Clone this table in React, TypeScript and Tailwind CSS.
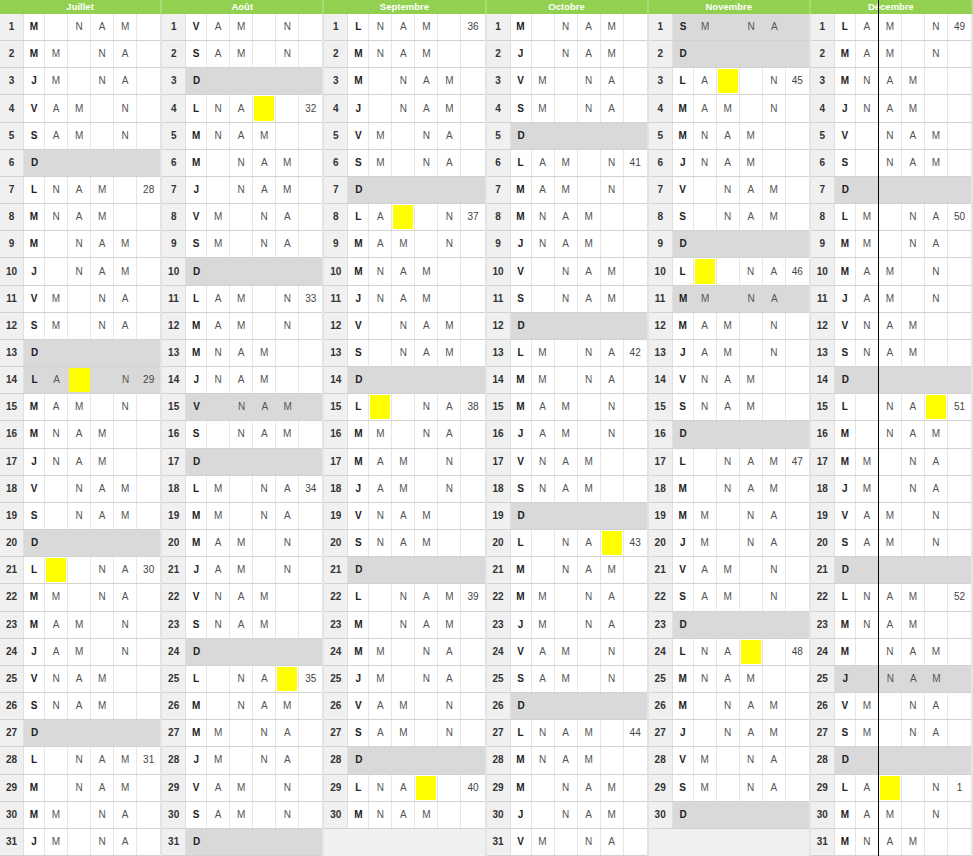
const months: { name: string; rows: (string | null)[] }[] = [
  {
    name: 'Juillet',
    rows: ['M:_NAM', 'M:M_NA', 'J:M_NA', 'V:AM_N', 'S:AM_N', 'D', 'L:NAM_:28', 'M:NAM_', 'M:_NAM', 'J:_NAM', 'V:M_NA', 'S:M_NA', 'D', 'L:AY_N:29:g', 'M:AM_N', 'M:NAM_', 'J:NAM_', 'V:_NAM', 'S:_NAM', 'D', 'L:Y_NA:30', 'M:M_NA', 'M:AM_N', 'J:AM_N', 'V:NAM_', 'S:NAM_', 'D', 'L:_NAM:31', 'M:_NAM', 'M:M_NA', 'J:M_NA'],
  },
  {
    name: 'Août',
    rows: ['V:AM_N', 'S:AM_N', 'D', 'L:NAY_:32', 'M:NAM_', 'M:_NAM', 'J:_NAM', 'V:M_NA', 'S:M_NA', 'D', 'L:AM_N:33', 'M:AM_N', 'M:NAM_', 'J:NAM_', 'V:_NAM::g', 'S:_NAM', 'D', 'L:M_NA:34', 'M:M_NA', 'M:AM_N', 'J:AM_N', 'V:NAM_', 'S:NAM_', 'D', 'L:_NAY:35', 'M:_NAM', 'M:M_NA', 'J:M_NA', 'V:AM_N', 'S:AM_N', 'D'],
  },
  {
    name: 'Septembre',
    rows: ['L:NAM_:36', 'M:NAM_', 'M:_NAM', 'J:_NAM', 'V:M_NA', 'S:M_NA', 'D', 'L:AY_N:37', 'M:AM_N', 'M:NAM_', 'J:NAM_', 'V:_NAM', 'S:_NAM', 'D', 'L:Y_NA:38', 'M:M_NA', 'M:AM_N', 'J:AM_N', 'V:NAM_', 'S:NAM_', 'D', 'L:_NAM:39', 'M:_NAM', 'M:M_NA', 'J:M_NA', 'V:AM_N', 'S:AM_N', 'D', 'L:NAY_:40', 'M:NAM_', null],
  },
  {
    name: 'Octobre',
    rows: ['M:_NAM', 'J:_NAM', 'V:M_NA', 'S:M_NA', 'D', 'L:AM_N:41', 'M:AM_N', 'M:NAM_', 'J:NAM_', 'V:_NAM', 'S:_NAM', 'D', 'L:M_NA:42', 'M:M_NA', 'M:AM_N', 'J:AM_N', 'V:NAM_', 'S:NAM_', 'D', 'L:_NAY:43', 'M:_NAM', 'M:M_NA', 'J:M_NA', 'V:AM_N', 'S:AM_N', 'D', 'L:NAM_:44', 'M:NAM_', 'M:_NAM', 'J:_NAM', 'V:M_NA'],
  },
  {
    name: 'Novembre',
    rows: ['S:M_NA::g', 'D', 'L:AY_N:45', 'M:AM_N', 'M:NAM_', 'J:NAM_', 'V:_NAM', 'S:_NAM', 'D', 'L:Y_NA:46', 'M:M_NA::g', 'M:AM_N', 'J:AM_N', 'V:NAM_', 'S:NAM_', 'D', 'L:_NAM:47', 'M:_NAM', 'M:M_NA', 'J:M_NA', 'V:AM_N', 'S:AM_N', 'D', 'L:NAY_:48', 'M:NAM_', 'M:_NAM', 'J:_NAM', 'V:M_NA', 'S:M_NA', 'D', null],
  },
  {
    name: 'Décembre',
    rows: ['L:AM_N:49', 'M:AM_N', 'M:NAM_', 'J:NAM_', 'V:_NAM', 'S:_NAM', 'D', 'L:M_NA:50', 'M:M_NA', 'M:AM_N', 'J:AM_N', 'V:NAM_', 'S:NAM_', 'D', 'L:_NAY:51', 'M:_NAM', 'M:M_NA', 'J:M_NA', 'V:AM_N', 'S:AM_N', 'D', 'L:NAM_:52', 'M:NAM_', 'M:_NAM', 'J:_NAM::g', 'V:M_NA', 'S:M_NA', 'D', 'L:AY_N:1', 'M:AM_N', 'M:NAM_'],
  },
];

function Row({ day, spec }: { day: number; spec: string | null }) {
  if (spec === null) {
    return <div className="bg-[#f0f0f0]" />;
  }
  const [letter, cells = '____', week = '', flag = ''] = spec.split(':');
  const gray = letter === 'D' || flag === 'g';
  const line = gray ? '' : 'border-r border-[#e6e6e6]';

  return (
    <div className="flex min-h-0 border-b border-[#d2d2d2]">
      <div className="w-[24px] shrink-0 flex items-center justify-center bg-[#f0f0f0] border-r border-[#e0e0e0] font-bold text-[#333]">
        {day}
      </div>
      <div className={`flex-1 grid grid-cols-[21px_repeat(5,minmax(0,1fr))] ${gray ? 'bg-[#d9d9d9]' : 'bg-white'}`}>
        <div className={`flex items-center justify-center font-bold text-[#222] ${line}`}>{letter}</div>
        {cells.split('').map((c, i) =>
          c === 'Y' ? (
            <div key={i} className={`p-px ${line}`}>
              <div className="h-full bg-[#ffff00]" />
            </div>
          ) : (
            <div key={i} className={`flex items-center justify-center text-[#555] ${line}`}>
              {c === '_' ? '' : c}
            </div>
          ),
        )}
        <div className="flex items-center justify-center text-[#444]">{week}</div>
      </div>
    </div>
  );
}

export default function App() {
  return (
    <div className="relative w-[973px] h-[856px] overflow-hidden bg-white flex flex-col font-['Liberation_Sans',Arial,sans-serif] text-[10px] leading-none">
      {/* Month header bar */}
      <div className="h-[14px] shrink-0 grid grid-cols-6 bg-[#92d050]">
        {months.map((m) => (
          <div key={m.name} className="flex items-center justify-center text-white font-bold text-[9.5px] border-r-2 border-[#a9da75]">
            {m.name}
          </div>
        ))}
      </div>

      {/* Day grid */}
      <div className="flex-1 min-h-0 grid grid-cols-6">
        {months.map((m) => (
          <div key={m.name} className="grid grid-rows-[repeat(31,minmax(0,1fr))] border-r-2 border-[#e4e4e4]">
            {m.rows.map((r, i) => (
              <Row key={i} day={i + 1} spec={r} />
            ))}
          </div>
        ))}
      </div>

      {/* Frozen-pane line */}
      <div className="absolute left-[878px] top-0 h-full w-px bg-black" />
    </div>
  );
}
